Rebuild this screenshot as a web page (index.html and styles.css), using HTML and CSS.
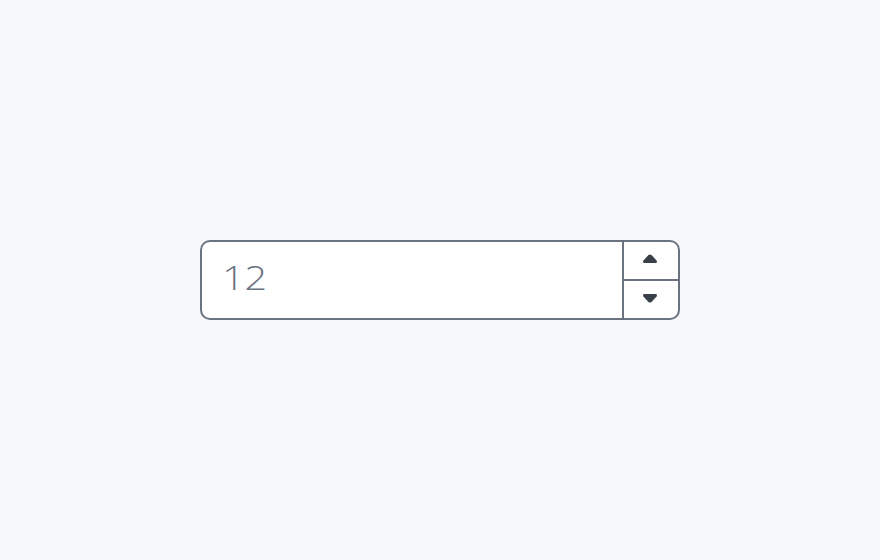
FILE: index.html
```html
<!DOCTYPE html>
<html lang="en">
<head>
<meta charset="utf-8">
<title>Number input</title>
<link rel="stylesheet" href="styles.css">
</head>
<body>
<main class="stage">
  <div class="spin">
    <div class="spin-value"><span class="spin-text">12</span></div>
    <div class="spin-buttons">
      <button class="spin-btn" aria-label="Increase">
        <svg width="16" height="10" viewBox="0 0 16 10"><path d="M6.5 1.1 Q8 -0.3 9.5 1.1 L14.6 6.6 Q15.8 8.9 13.4 8.9 L2.6 8.9 Q0.2 8.9 1.4 6.6 Z" fill="currentColor"/></svg>
      </button>
      <button class="spin-btn" aria-label="Decrease">
        <svg width="16" height="10" viewBox="0 0 16 10"><path d="M6.5 8.9 Q8 10.3 9.5 8.9 L14.6 3.4 Q15.8 1.1 13.4 1.1 L2.6 1.1 Q0.2 1.1 1.4 3.4 Z" fill="currentColor"/></svg>
      </button>
    </div>
  </div>
</main>
</body>
</html>
```

FILE: styles.css
```css
html, body {
  margin: 0;
  padding: 0;
  background: #f7f8fa;
}
.stage {
  width: 880px;
  height: 560px;
  display: flex;
  align-items: center;
  justify-content: center;
}
.spin {
  box-sizing: border-box;
  width: 480px;
  height: 80px;
  border: 2px solid #6b7280;
  border-radius: 10px;
  background: #ffffff;
  display: flex;
  overflow: hidden;
}
.spin-value {
  flex: 1;
  display: flex;
  align-items: center;
  padding-left: 20px;
  padding-bottom: 5px;
  font-family: "Open Sans", "Inter", sans-serif;
  font-weight: 350;
  font-size: 33px;
  line-height: 1;
  color: #6b7280;
}
.spin-text {
  display: inline-block;
  transform: scaleX(1.2);
  transform-origin: left center;
}
.spin-buttons {
  width: 54px;
  border-left: 2px solid #6b7280;
  display: flex;
  flex-direction: column;
}
.spin-btn {
  flex: 1;
  margin: 0;
  padding: 0 2px 3px 0;
  border: 0;
  background: transparent;
  color: #3a4049;
  display: flex;
  align-items: center;
  justify-content: center;
}
.spin-btn + .spin-btn {
  border-top: 2px solid #6b7280;
}
.spin-btn svg {
  display: block;
}
```
